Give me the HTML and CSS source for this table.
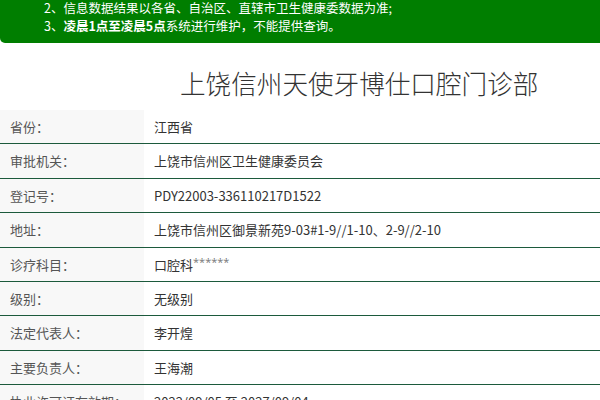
FILE: index.html
```html
<!DOCTYPE html>
<html lang="zh-CN">
<head>
<meta charset="utf-8">
<title>上饶信州天使牙博仕口腔门诊部</title>
<link rel="stylesheet" href="styles.css">
</head>
<body>
<div class="notice">
  <p class="notice-line">2、信息数据结果以各省、自治区、直辖市卫生健康委数据为准;</p>
  <p class="notice-line">3、<b>凌晨1点至凌晨5点</b>系统进行维护，不能提供查询。</p>
</div>
<h1 class="title">上饶信州天使牙博仕口腔门诊部</h1>
<table class="info">
  <tr><th>省份：</th><td>江西省</td></tr>
  <tr><th>审批机关：</th><td>上饶市信州区卫生健康委员会</td></tr>
  <tr><th>登记号：</th><td>PDY22003-336110217D1522</td></tr>
  <tr><th>地址：</th><td>上饶市信州区御景新苑9-03#1-9//1-10、2-9//2-10</td></tr>
  <tr><th>诊疗科目：</th><td>口腔科<span class="stars">******</span></td></tr>
  <tr><th>级别：</th><td>无级别</td></tr>
  <tr><th>法定代表人：</th><td>李开煌</td></tr>
  <tr><th>主要负责人：</th><td>王海潮</td></tr>
  <tr><th>执业许可证有效期：</th><td>2022/09/05 至 2027/09/04</td></tr>
</table>
</body>
</html>
```
FILE: styles.css
```css
html, body {
  margin: 0;
  padding: 0;
  background: #fff;
}
body {
  font-family: "Noto Sans CJK SC", sans-serif;
  color: #333;
}
.notice {
  background: #007e00;
  color: #fff;
  border-radius: 0 0 0 5px;
  padding: 0 0 9px 44px;
  height: 35px;
  font-size: 12.5px;
  line-height: 18px;
  margin-top: -1px;
}
.notice-line {
  margin: 0;
  white-space: nowrap;
}
.notice-line b {
  font-weight: 700;
}
.title {
  margin: 0;
  padding: 20px 0 7px 180px;
  font-size: 25.6px;
  line-height: 40px;
  font-weight: 300;
  color: #333;
}
.info {
  width: 100%;
  border-collapse: collapse;
  font-size: 13px;
}
.info tr {
  border-bottom: 1px solid #1c5a3c;
}
.info th, .info td {
  padding: 8px 10px;
  line-height: 17.4px;
  text-align: left;
  font-weight: 400;
  white-space: nowrap;
}
.info th {
  width: 124px;
  background: #f8f8f8;
  color: #555;
}
.info td {
  color: #333;
}
.stars {
  font-family: "Open Sans", sans-serif;
  font-size: 11px;
  line-height: 12px;
  color: #777;
  vertical-align: top;
}
```
